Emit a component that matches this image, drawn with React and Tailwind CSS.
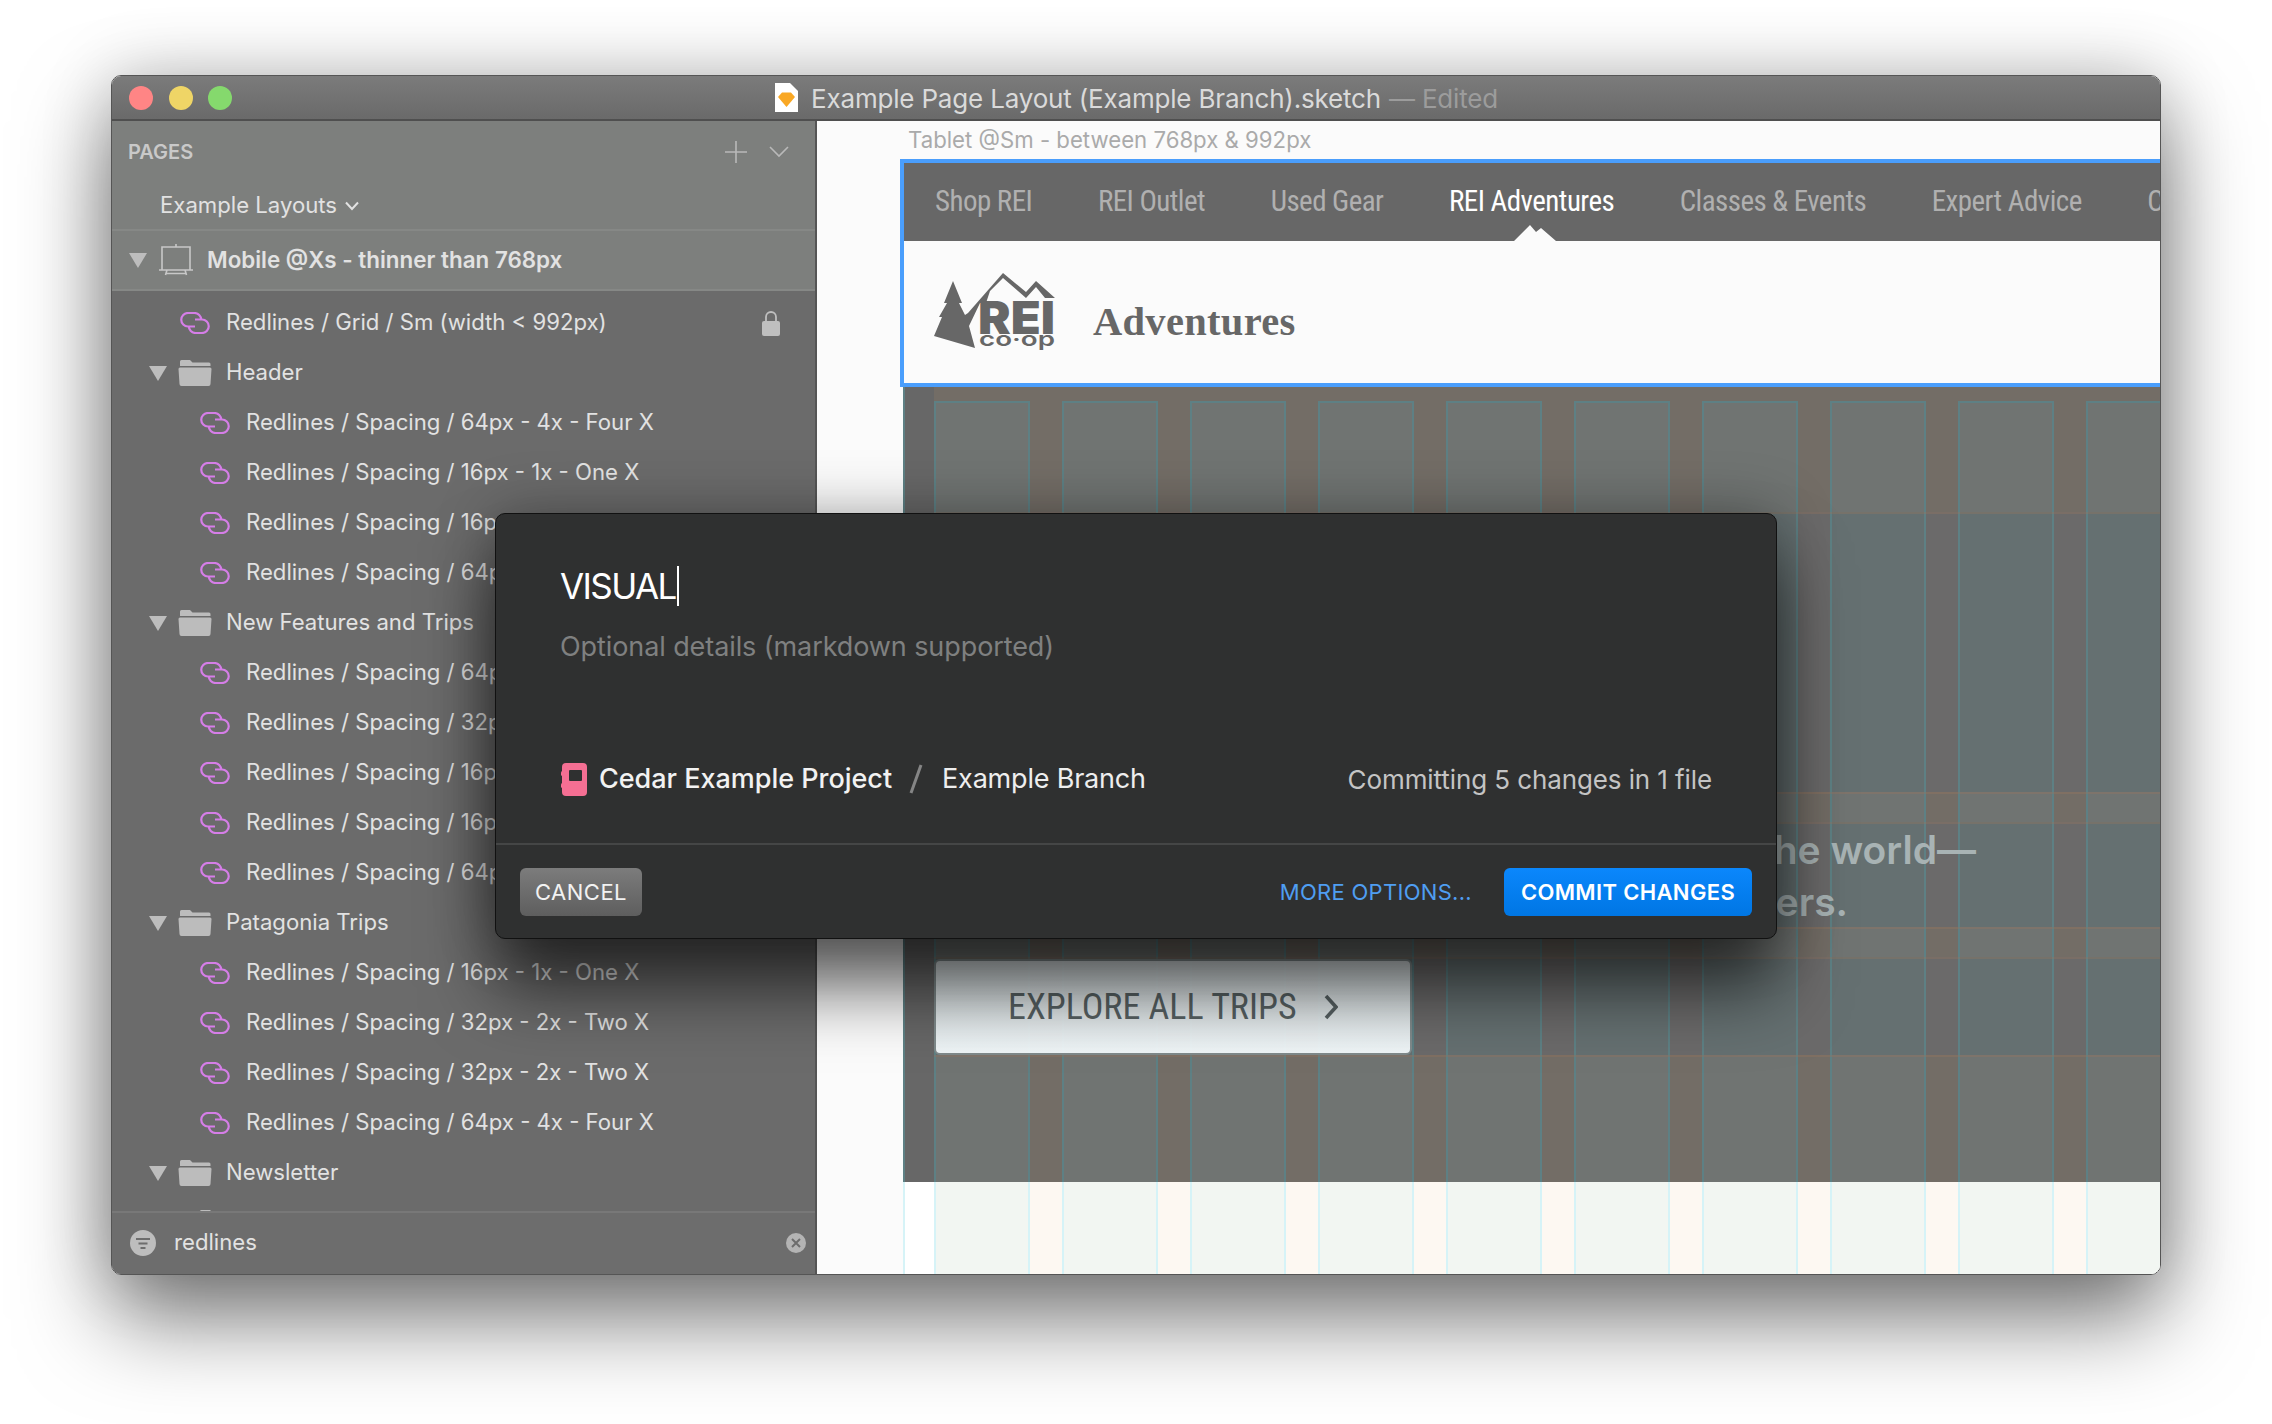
import React from "react";

const sans = "font-['Inter','Liberation_Sans',sans-serif]";
const cond = "font-['Roboto','Liberation_Sans',sans-serif] font-stretch-[75%]";

function Link({ cls }) {
  return (
    <svg width="30" height="22" viewBox="0 0 30 22" fill="none" stroke="#d67ee8" strokeWidth="2.2" className={cls}>
      <path d="M15 14.5H8A6.75 6.75 0 0 1 8 1H14.5A6.75 6.75 0 0 1 21.2 7.7" />
      <path d="M15 7.5H22A6.75 6.75 0 0 1 22 21H15.5A6.75 6.75 0 0 1 8.8 14.3" />
    </svg>
  );
}
function Tri() {
  return (
    <svg width="18" height="15" viewBox="0 0 18 15" fill="#bdbdbd" className="shrink-0">
      <polygon points="0,0 18,0 9,15" />
    </svg>
  );
}
function Folder() {
  return (
    <svg width="34" height="26" viewBox="0 0 34 26" fill="#bcbcbc" className="shrink-0">
      <path d="M2 1.5A1.5 1.5 0 0 1 3.5 0H12L14.5 2.5H31A1.5 1.5 0 0 1 32.5 4V6H2Z" />
      <path d="M0.5 9A1.5 1.5 0 0 1 2 7.5H32A1.5 1.5 0 0 1 33.5 9L32.5 24A2 2 0 0 1 30.5 26H3.5A2 2 0 0 1 1.5 24Z" />
    </svg>
  );
}

const S64 = "Redlines / Spacing / 64px - 4x - Four X";
const S32 = "Redlines / Spacing / 32px - 2x - Two X";
const S16 = "Redlines / Spacing / 16px - 1x - One X";

function LinkRow({ t }) {
  return (
    <div className="h-[50px] flex items-center pl-[88px] gap-[16px] shrink-0">
      <Link />
      <span className="whitespace-nowrap">{t}</span>
    </div>
  );
}
function FolderRow({ t }) {
  return (
    <div className="h-[50px] flex items-center pl-[37px] shrink-0">
      <Tri />
      <span className="ml-[11px]"><Folder /></span>
      <span className="ml-[14px] whitespace-nowrap">{t}</span>
    </div>
  );
}

function Sidebar() {
  return (
    <aside className="w-[705px] shrink-0 h-full flex flex-col bg-[#6b6b6b] border-r-2 border-[#555555] text-[#e2e2e2] text-[22.15px]">
      <div className="bg-[#7d7f7d] border-b-2 border-[#868886] h-[110px] flex flex-col shrink-0">
        <div className="h-[62px] shrink-0 flex items-center pl-[16px] pr-[26px]">
          <span className="font-semibold text-[20px] text-[#c9c9c9]">PAGES</span>
          <svg width="24" height="24" viewBox="0 0 24 24" stroke="#b9b9b9" strokeWidth="1.6" className="ml-auto"><path d="M12 1V23M1 12H23" /></svg>
          <svg width="20" height="12" viewBox="0 0 20 12" fill="none" stroke="#b9b9b9" strokeWidth="1.6" className="ml-[21px]"><path d="M1 1L10 10L19 1" /></svg>
        </div>
        <div className="flex-1 flex items-center pl-[48px] gap-[8px]">
          <span>Example Layouts</span>
          <svg width="14" height="10" viewBox="0 0 14 10" fill="none" stroke="#e2e2e2" strokeWidth="2"><path d="M1 1.5L7 8L13 1.5" /></svg>
        </div>
      </div>
      <div className="h-[60px] bg-[#7d7f7d] border-b-2 border-[#868886] flex items-center pl-[17px] shrink-0 font-semibold text-[22.4px]">
        <Tri />
        <svg width="34" height="32" viewBox="0 0 34 32" fill="none" stroke="#c8c8c8" strokeWidth="1.6" className="ml-[12px]">
          <path d="M17 0V3M3 3H31V26H3ZM0 26H34M8 26L6.5 31M26 26L27.5 31M7 29.5H27" />
        </svg>
        <span className="ml-[14px]">Mobile @Xs - thinner than 768px</span>
      </div>
      <div className="flex-1 min-h-0 overflow-hidden flex flex-col pt-[7px]">
        <div className="h-[50px] flex items-center pl-[68px] gap-[16px] pr-[35px] shrink-0">
          <Link />
          <span>Redlines / Grid / Sm (width &lt; 992px)</span>
          <svg width="18" height="26" viewBox="0 0 18 26" className="ml-auto">
            <path d="M4 12V7A5 5 0 0 1 14 7V12" fill="none" stroke="#bfbfbf" strokeWidth="1.8" />
            <rect x="0" y="11" width="18" height="15" rx="2" fill="#bfbfbf" />
          </svg>
        </div>
        <FolderRow t="Header" />
        <LinkRow t={S64} /><LinkRow t={S16} /><LinkRow t={S16} /><LinkRow t={S64} />
        <FolderRow t="New Features and Trips" />
        <LinkRow t={S64} /><LinkRow t={S32} /><LinkRow t={S16} /><LinkRow t={S16} /><LinkRow t={S64} />
        <FolderRow t="Patagonia Trips" />
        <LinkRow t={S16} /><LinkRow t={S32} /><LinkRow t={S32} /><LinkRow t={S64} />
        <FolderRow t="Newsletter" />
        <div className="h-[50px] flex items-center pl-[86px] shrink-0"><Folder /></div>
      </div>
      <div className="h-[63px] shrink-0 bg-[#6d6d6d] border-t-2 border-[#787878] flex items-center pl-[18px] pr-[9px] pb-[2px]">
        <svg width="26" height="26" viewBox="0 0 26 26" className="shrink-0">
          <circle cx="13" cy="13" r="13" fill="#bdbdbd" />
          <path d="M6 9H20M8.5 13.5H17.5M10.5 18H15.5" stroke="#6d6d6d" strokeWidth="2.2" />
        </svg>
        <span className="ml-[18px]">redlines</span>
        <svg width="20" height="20" viewBox="0 0 20 20" className="ml-auto">
          <circle cx="10" cy="10" r="10" fill="#b4b4b4" />
          <path d="M6 6L14 14M14 6L6 14" stroke="#6d6d6d" strokeWidth="2" />
        </svg>
      </div>
    </aside>
  );
}

const COLS = [0, 1, 2, 3, 4, 5, 6, 7, 8, 9];
function GridRow({ h, kind, top, line }) {
  const col = kind === "hero" ? "bg-[#657071]" : kind === "light" ? "bg-[#f2f6f2]" : "bg-[#707472]";
  const gut = kind === "hero" ? "bg-[#6b6a6a]" : kind === "light" ? "bg-[#fdf8f2]" : "bg-[#736d66]";
  const bd = kind === "light" ? "border-[#d6f3f7]" : "border-[#5e8084]";
  return (
    <div className={`${h} flex shrink-0 relative`}>
      <div className={`w-[31px] shrink-0 border-l-2 ${bd} ${kind === "light" ? "bg-white" : "bg-[#676767]"}`} />
      {COLS.map((i) => (
        <React.Fragment key={i}>
          <div className={`w-[96px] shrink-0 border-x-2 ${bd} ${col} ${top ? "border-t-2" : ""}`} />
          <div className={`w-[32px] shrink-0 ${gut}`} />
        </React.Fragment>
      ))}
      {line && <div className="absolute left-[31px] right-0 top-0 h-[2px] bg-[#97755f]/35" />}
    </div>
  );
}

function Logo() {
  return (
    <svg width="122" height="80" viewBox="0 0 122 80" fill="#676767" className="shrink-0 mt-[2px]">
      <polygon points="19,8 28,30 25,30 31,42 34,40 69,0 92,19 102,8 121,25 111,25 102,14 92,25 69,5 56,18 52,30 46,30 35,53 41,75 0,63 8,44 5,44 13,30 10,30" />
      <text x="44" y="61" fontFamily="Inter, sans-serif" fontWeight="900" fontSize="45" textLength="77" lengthAdjust="spacingAndGlyphs">REI</text>
      <text x="45" y="73" fontFamily="Inter, sans-serif" fontWeight="600" fontSize="20" textLength="76" lengthAdjust="spacingAndGlyphs">co·op</text>
    </svg>
  );
}

function Canvas() {
  const nav = [
    ["Shop REI", false], ["REI Outlet", false], ["Used Gear", false], ["REI Adventures", true],
    ["Classes & Events", false], ["Expert Advice", false], ["Camping", false],
  ];
  return (
    <main className="flex-1 min-w-0 h-full bg-[#fbfbfb] flex flex-col overflow-hidden relative">
      <div className={`h-[38px] shrink-0 pl-[91px] flex items-center text-[22.2px] text-[#aaaaaa] ${sans}`}>
        Tablet @Sm - between 768px &amp; 992px
      </div>
      <div className="ml-[83px] shrink-0 w-[1400px] border-y-4 border-l-4 border-[#4a9efc] h-[228px] flex flex-col">
        <nav className={`h-[78px] bg-[#676767] flex items-center pl-[31px] gap-[65.6px] text-[29px] tracking-[-0.54px] text-[#b0b0b0] ${cond} relative shrink-0`}>
          {nav.map(([t, a]) => (
            <span key={t} className={`whitespace-nowrap ${a ? "text-white" : ""}`}>{t}</span>
          ))}
          <svg width="42" height="16" viewBox="0 0 42 16" fill="#fbfbfb" className="absolute left-[610px] bottom-0">
            <polygon points="0,16 16,0 22,7 27,3 42,16" />
          </svg>
        </nav>
        <div className="flex-1 bg-[#fbfbfb] flex items-center pl-[30px]">
          <Logo />
          <span className="ml-[37px] mt-[20px] font-['Liberation_Serif',serif] font-bold text-[40.5px] text-[#676767] tracking-[0.3px]">Adventures</span>
        </div>
      </div>
      <div className="ml-[86px] flex-1 min-h-0 overflow-hidden flex flex-col relative">
        <div className="h-[14px] shrink-0 flex bg-[#736d66]"><div className="w-[31px] bg-[#676767] border-l-2 border-[#5e8084]" /></div>
        <GridRow h="h-[111px]" kind="band" top />
        <GridRow h="h-[280px]" kind="hero" line />
        <GridRow h="h-[30px]" kind="band" line />
        <GridRow h="h-[105px]" kind="hero" line />
        <GridRow h="h-[30px]" kind="band" line />
        <GridRow h="h-[98px]" kind="hero" line />
        <GridRow h="h-[127px]" kind="band" line />
        <GridRow h="h-[93px]" kind="light" />

        <span className={`absolute right-[184px] top-[434px] text-[39px] font-semibold text-[#a8b3b4] whitespace-nowrap ${sans}`}>the world—</span>
        <span className={`absolute right-[312px] top-[486px] text-[39px] font-semibold text-[#a8b3b4] whitespace-nowrap ${sans}`}>explorers.</span>

        <div className="absolute left-[31px] top-[572px] w-[478px] h-[96px] bg-gradient-to-b from-[#dde4e6]/90 to-[#f6fcfe]/95 border-2 border-[#7f8a8b] rounded-[6px] flex items-center pl-[72px]">
          <span className={`${cond} text-[36px] text-[#586264] whitespace-nowrap`}>EXPLORE ALL TRIPS</span>
          <svg width="14" height="26" viewBox="0 0 14 26" fill="none" stroke="#586264" strokeWidth="3.6" className="ml-[27px]"><path d="M2 2L12 13L2 24" /></svg>
        </div>
      </div>
    </main>
  );
}

function Modal() {
  return (
    <div className={`absolute left-[383px] top-[437px] w-[1282px] h-[426px] rounded-[10px] bg-[#2f3030] border border-[#111111] shadow-[0_0_60px_rgba(0,0,0,0.3),0_50px_70px_rgba(0,0,0,0.6)] flex flex-col ${sans}`}>
      <div className="flex-1 flex flex-col pl-[64px] pr-[64px]">
        <div className="mt-[50px] h-[44px] flex items-center text-[35px] text-white tracking-[-1.6px] leading-none">
          VISUAL<span className="w-[2px] h-[40px] bg-white ml-[1px]" />
        </div>
        <div className="mt-[21px] text-[27px] leading-[36px] text-[#7f8080] tracking-[-0.09px]">Optional details (markdown supported)</div>
        <div className="mt-[94px] flex items-center">
          <svg width="26" height="33" viewBox="0 0 26 33" className="shrink-0 ml-[1px]">
            <rect x="1" y="0" width="25" height="33" rx="4" fill="#f56f93" />
            <rect x="0" y="8" width="3" height="5" rx="1.5" fill="#f56f93" />
            <rect x="0" y="20" width="3" height="5" rx="1.5" fill="#f56f93" />
            <rect x="8" y="7" width="13" height="11" rx="1" fill="#2f3030" />
          </svg>
          <span className="ml-[12px] text-[27px] font-medium text-[#f2f2f2] tracking-[-0.02px]">Cedar Example Project</span>
          <svg width="14" height="30" viewBox="0 0 14 30" className="ml-[17px]"><path d="M12 1L2 29" stroke="#858585" strokeWidth="3" /></svg>
          <span className="ml-[19px] text-[27px] text-[#eeeeee] tracking-[-0.2px]">Example Branch</span>
          <span className="ml-auto text-[26px] text-[#c4c4c4] tracking-[-0.1px]">Committing 5 changes in 1 file</span>
        </div>
      </div>
      <div className="h-[95px] shrink-0 border-t-2 border-[#454646] flex items-center pl-[24px] pr-[24px]">
        <button className="w-[122px] h-[48px] pt-[2px] rounded-[6px] bg-gradient-to-b from-[#7c7c7c] to-[#5e5e5e] text-[#f2f2f2] text-[22px] tracking-[0.5px]">CANCEL</button>
        <span className="ml-auto pt-[2px] text-[22px] text-[#4f9ef2] tracking-[0.3px]">MORE OPTIONS...</span>
        <button className="ml-[32px] w-[248px] h-[48px] pt-[2px] rounded-[6px] bg-gradient-to-b from-[#0b87fc] to-[#0076e4] text-white text-[22px] font-semibold tracking-[0.35px]">COMMIT CHANGES</button>
      </div>
    </div>
  );
}

export default function App() {
  return (
    <div className="w-[2272px] h-[1424px] bg-white pl-[111px] pt-[75px] overflow-hidden">
      <div className={`relative w-[2050px] h-[1200px] rounded-[10px] overflow-hidden border border-[#555555] shadow-[0_0_70px_rgba(0,0,0,0.2),0_45px_90px_rgba(0,0,0,0.5)] flex flex-col ${sans}`}>
        <header className="h-[45px] shrink-0 bg-gradient-to-b from-[#7b7b7b] to-[#6a6a6a] border-b-2 border-[#4f4f4f] flex items-center pl-[17px] relative">
          <span className="w-[24px] h-[24px] rounded-full bg-[#ff8585]" />
          <span className="ml-[15.5px] w-[24px] h-[24px] rounded-full bg-[#efd566]" />
          <span className="ml-[15.5px] w-[24px] h-[24px] rounded-full bg-[#85d96d]" />
          <svg width="23" height="29" viewBox="0 0 23 29" className="ml-[543px] shrink-0">
            <path d="M0 0H15L23 8V29H0Z" fill="#ffffff" />
            <path d="M7 9.5H16L20 14L11.5 24L3 14Z" fill="#f9a825" />
          </svg>
          <span className="ml-[13px] mt-[2px] text-[26px] tracking-[-0.18px] text-[#dadada] whitespace-nowrap">Example Page Layout (Example Branch).sketch</span>
          <span className="ml-[8px] mt-[2px] text-[26px] tracking-[-0.18px] text-[#9c9c9c] whitespace-nowrap">— Edited</span>
        </header>
        <div className="flex-1 min-h-0 flex">
          <Sidebar />
          <Canvas />
        </div>
        <Modal />
      </div>
    </div>
  );
}
